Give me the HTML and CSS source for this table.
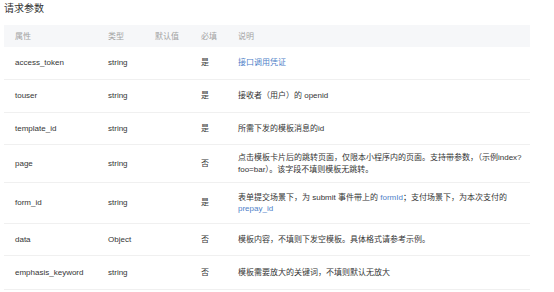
FILE: index.html
```html
<!DOCTYPE html>
<html lang="zh-CN">
<head>
<meta charset="utf-8">
<title>请求参数</title>
<link rel="stylesheet" href="styles.css">
</head>
<body>
<h3 class="title">请求参数</h3>
<table class="params">
  <colgroup>
    <col class="c-name"><col class="c-type"><col class="c-def"><col class="c-req"><col class="c-desc">
  </colgroup>
  <thead>
    <tr><th>属性</th><th>类型</th><th>默认值</th><th>必填</th><th>说明</th></tr>
  </thead>
  <tbody>
    <tr class="r33"><td>access_token</td><td>string</td><td></td><td>是</td><td><a class="link">接口调用凭证</a></td></tr>
    <tr class="r33"><td>touser</td><td>string</td><td></td><td>是</td><td>接收者（用户）的 openid</td></tr>
    <tr class="r32"><td>template_id</td><td>string</td><td></td><td>是</td><td>所需下发的模板消息的id</td></tr>
    <tr class="r38"><td>page</td><td>string</td><td></td><td>否</td><td>点击模板卡片后的跳转页面，仅限本小程序内的页面。支持带参数，（示例index?<br>foo=bar）。该字段不填则模板无跳转。</td></tr>
    <tr class="r41"><td>form_id</td><td>string</td><td></td><td>是</td><td>表单提交场景下，为 submit 事件带上的 <a class="link">formId</a>；支付场景下，为本次支付的<br><a class="link">prepay_id</a></td></tr>
    <tr class="r32"><td>data</td><td>Object</td><td></td><td>否</td><td>模板内容，不填则下发空模板。具体格式请参考示例。</td></tr>
    <tr class="r34"><td>emphasis_keyword</td><td>string</td><td></td><td>否</td><td>模板需要放大的关键词，不填则默认无放大</td></tr>
  </tbody>
</table>
</body>
</html>
```
FILE: styles.css
```css
html, body {
  margin: 0;
  padding: 0;
  background: #ffffff;
}
body {
  padding: 0 4px;
  font-family: "Liberation Sans", "Noto Sans CJK SC", sans-serif;
  color: #353535;
}
.title {
  margin: 0;
  padding-top: 3px;
  height: 22px;
  font-size: 10px;
  line-height: 12px;
  font-weight: normal;
  color: #333333;
}
.params {
  width: 526px;
  border-collapse: collapse;
  table-layout: fixed;
  font-size: 8px;
}
.c-name { width: 93px; }
.c-type { width: 47px; }
.c-def { width: 46px; }
.c-req { width: 37px; }
.c-desc { width: 303px; }
.params th {
  height: 22px;
  padding: 0 0 0 11px;
  background: #f6f7f9;
  color: #a3a3a3;
  font-weight: normal;
  text-align: left;
  line-height: 11px;
}
.params td {
  padding: 0 0 0 11px;
  border-bottom: 1px solid #f0f0f0;
  line-height: 11.5px;
  vertical-align: middle;
  white-space: nowrap;
}
.r32 td { height: 31px; }
.r33 td { height: 32px; }
.r34 td { height: 33px; }
.r38 td { height: 37px; }
.r41 td { height: 40px; }
.link {
  color: #4f7fc9;
  text-decoration: none;
}
```
